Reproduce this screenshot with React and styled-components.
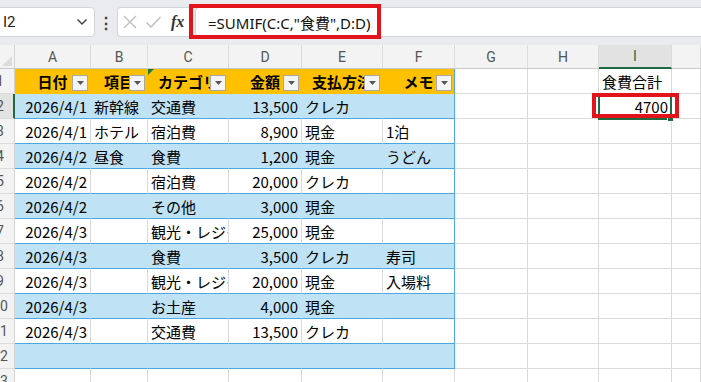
import styled, { createGlobalStyle } from "styled-components";

const GlobalStyle = createGlobalStyle`
  body {
    margin: 0;
    background: #fff;
    overflow: hidden;
    font-family: "Noto Sans CJK JP", "Noto Sans", sans-serif;
  }
`;

const Page = styled.div`
  width: 701px;
  height: 382px;
  overflow: hidden;
  display: flex;
  flex-direction: column;
  background: #fff;
`;

const Toolbar = styled.div`
  box-sizing: border-box;
  height: 45px;
  flex: none;
  background: #e9ebee;
  padding: 7px 0 8px;
  display: flex;
`;

const NameBox = styled.div`
  box-sizing: border-box;
  width: 101px;
  margin-left: -6px;
  background: #fff;
  border: 1px solid #d3d5d9;
  border-radius: 4px;
  display: flex;
  align-items: center;
  justify-content: space-between;
  padding: 0 6px 0 8px;
  font-family: Roboto, "Noto Sans", sans-serif;
  font-size: 15px;
  color: #222;
`;

const Dots = styled.div`
  width: 22px;
  display: flex;
  align-items: center;
  justify-content: center;
  font-size: 16px;
  font-weight: bold;
  color: #444;
`;

const FxBox = styled.div`
  box-sizing: border-box;
  width: 76px;
  background: #fff;
  border: 1px solid #d3d5d9;
  border-right: none;
  border-radius: 4px 0 0 4px;
  display: flex;
  align-items: center;
  gap: 7px;
  padding-left: 4px;
`;

const FxText = styled.span`
  font-family: "Liberation Serif", "DejaVu Serif", serif;
  font-style: italic;
  font-weight: 700;
  font-size: 16px;
  color: #333;
  margin-left: 2px;
`;

const FormulaInput = styled.div`
  box-sizing: border-box;
  flex: 1;
  margin-left: 2px;
  margin-right: -10px;
  background: #fff;
  border: 1px solid #d3d5d9;
  border-radius: 4px;
  position: relative;
  display: flex;
  align-items: center;
  padding-left: 12px;
  font-family: "Noto Sans", "Noto Sans CJK JP", sans-serif;
  font-size: 15px;
  color: #111;
`;

const Callout = styled.div`
  position: absolute;
  box-sizing: border-box;
  border: 4px solid #e3131b;
  pointer-events: none;
  z-index: 5;
  left: ${(p) => p.$left}px;
  top: ${(p) => p.$top}px;
  width: ${(p) => p.$w}px;
  height: ${(p) => p.$h}px;
`;

const Sheet = styled.div`
  display: grid;
  grid-template-columns: 15px 76px 57px 81px 73px 81px 72px 73px 71px 73px 1fr;
  grid-template-rows: 24px;
  grid-auto-rows: 25px;
`;

const Corner = styled.div`
  position: relative;
  background: #f3f3f3;
  border-right: 1px solid #d4d4d4;
  border-bottom: 1px solid #c9c9c9;
  box-sizing: border-box;

  &::after {
    content: "";
    position: absolute;
    right: 2px;
    bottom: 2px;
    border-left: 10px solid transparent;
    border-bottom: 10px solid #dcdcdc;
  }
`;

const ColHead = styled.div`
  box-sizing: border-box;
  display: flex;
  align-items: center;
  justify-content: center;
  background: ${(p) => (p.$active ? "#e2e2e2" : "#f3f3f3")};
  border-right: 1px solid #dcdcdc;
  border-bottom: ${(p) => (p.$active ? "2px solid #1e6b41" : "1px solid #c9c9c9")};
  font-family: Roboto, "Open Sans", sans-serif;
  font-size: 14px;
  color: ${(p) => (p.$active ? "#1e6b41" : "#555")};
`;

const RowHead = styled.div`
  box-sizing: border-box;
  overflow: hidden;
  background: ${(p) => (p.$active ? "#e2e2e2" : "#f3f3f3")};
  border-right: ${(p) => (p.$active ? "2px solid #1e6b41" : "1px solid #d4d4d4")};
  border-bottom: 1px solid #dcdcdc;
  display: flex;
  align-items: center;
`;

const RowNum = styled.span`
  flex: none;
  width: 30px;
  margin-left: -15px;
  text-align: center;
  font-family: Roboto, "Open Sans", sans-serif;
  font-size: 14px;
  color: #555;
`;

const Cell = styled.div`
  box-sizing: border-box;
  position: relative;
  display: flex;
  align-items: center;
  justify-content: ${(p) =>
    p.$align === "right" ? "flex-end" : p.$align === "center" ? "center" : "flex-start"};
  padding: 1px 3px 0;
  background: ${(p) => p.$bg || "#fff"};
  border-right: 1px solid ${(p) => p.$vline || "#dcdcdc"};
  border-bottom: 1px solid ${(p) => p.$hline || "#dcdcdc"};
  white-space: nowrap;
  overflow: ${(p) => (p.$selected ? "visible" : "hidden")};
  z-index: ${(p) => (p.$selected ? 3 : "auto")};
  font-size: 15px;
  font-weight: ${(p) => (p.$bold ? 700 : 400)};
  color: #000;
`;

const Selection = styled.div`
  position: absolute;
  left: -1px;
  top: -1px;
  right: -1px;
  bottom: -2px;
  border: 2px solid #1e6b41;
  pointer-events: none;

  &::after {
    content: "";
    position: absolute;
    right: -4px;
    bottom: -4px;
    width: 5px;
    height: 5px;
    background: #1e6b41;
    border: 1px solid #fff;
  }
`;

const FilterButton = styled.div`
  position: absolute;
  right: 2px;
  bottom: 2px;
  width: 16px;
  height: 16px;
  box-sizing: border-box;
  background: #f4f4f4;
  border: 1px solid #a8a8a8;
  display: flex;
  align-items: center;
  justify-content: center;
`;

const ErrorMark = styled.div`
  position: absolute;
  left: 0;
  top: 0;
  border-top: 6px solid #1a7a3c;
  border-right: 6px solid transparent;
`;

const ORANGE = "#ffc000";
const BLUE = "#bfe3f4";
const BLUE_LINE = "#4ea7de";
const GRID = "#d9d9d9";

const COLS = ["A", "B", "C", "D", "E", "F", "G", "H", "I", ""];
const HEADERS = ["日付", "項目", "カテゴリ", "金額", "支払方法", "メモ"];

const ROWS = [
  ["2026/4/1", "新幹線", "交通費", "13,500", "クレカ", ""],
  ["2026/4/1", "ホテル", "宿泊費", "8,900", "現金", "1泊"],
  ["2026/4/2", "昼食", "食費", "1,200", "現金", " うどん"],
  ["2026/4/2", "", "宿泊費", "20,000", "クレカ", ""],
  ["2026/4/2", "", "その他", "3,000", "現金", ""],
  ["2026/4/3", "", "観光・レジャー", "25,000", "現金", ""],
  ["2026/4/3", "", "食費", "3,500", "クレカ", "寿司"],
  ["2026/4/3", "", "観光・レジャー", "20,000", "現金", "入場料"],
  ["2026/4/3", "", "お土産", "4,000", "現金", ""],
  ["2026/4/3", "", "交通費", "13,500", "クレカ", ""],
  ["", "", "", "", "", ""],
];

const ALIGN = ["right", "left", "left", "right", "left", "left"];

function CrossIcon() {
  return (
    <svg width="16" height="16" viewBox="0 0 16 16">
      <path d="M2 2 L14 14 M14 2 L2 14" stroke="#bcbcbc" strokeWidth="1.3" fill="none" />
    </svg>
  );
}

function CheckIcon() {
  return (
    <svg width="17" height="16" viewBox="0 0 17 16">
      <path d="M1.5 8.5 L6 13 L15.5 3" stroke="#bcbcbc" strokeWidth="1.3" fill="none" />
    </svg>
  );
}

function Chevron() {
  return (
    <svg width="12" height="8" viewBox="0 0 12 8">
      <path d="M1.5 1.5 L6 6 L10.5 1.5" stroke="#444" strokeWidth="1.5" fill="none" />
    </svg>
  );
}

function DropArrow() {
  return (
    <svg width="7" height="4" viewBox="0 0 7 4">
      <path d="M0 0 L7 0 L3.5 4 Z" fill="#555" />
    </svg>
  );
}

function extraCells(rowNo) {
  const cells = [];
  for (let c = 6; c < 10; c++) {
    let content = null;
    let align = "left";
    let selected = false;
    if (c === 8 && rowNo === 1) content = "食費合計";
    if (c === 8 && rowNo === 2) {
      content = "4700";
      align = "right";
      selected = true;
    }
    cells.push(
      <Cell key={`${rowNo}-x${c}`} $align={align} $selected={selected} $vline={GRID} $hline={GRID}>
        {content}
        {selected && (
          <>
            <Selection />
            <Callout $left={-7} $top={-1} $w={87} $h={25} />
          </>
        )}
      </Cell>
    );
  }
  return cells;
}

export default function App() {
  return (
    <Page>
      <GlobalStyle />
      <Toolbar>
        <NameBox>
          <span>I2</span>
          <Chevron />
        </NameBox>
        <Dots>⋮</Dots>
        <FxBox>
          <CrossIcon />
          <CheckIcon />
          <FxText>fx</FxText>
        </FxBox>
        <FormulaInput>
          =SUMIF(C:C,"食費",D:D)
          <Callout $left={-7} $top={-4} $w={192} $h={35} />
        </FormulaInput>
      </Toolbar>

      <Sheet>
        <Corner />
        {COLS.map((c, i) => (
          <ColHead key={i} $active={c === "I"}>
            {c}
          </ColHead>
        ))}

        <RowHead>
          <RowNum>1</RowNum>
        </RowHead>
        {HEADERS.map((h, i) => (
          <Cell
            key={i}
            $align="center"
            $bold
            $bg={ORANGE}
            $vline={i === 5 ? BLUE_LINE : ORANGE}
            $hline={ORANGE}
          >
            {h}
            {i === 2 && <ErrorMark />}
            <FilterButton>
              <DropArrow />
            </FilterButton>
          </Cell>
        ))}
        {extraCells(1)}

        {ROWS.map((row, r) => {
          const rowNo = r + 2;
          const banded = rowNo % 2 === 0;
          return [
            <RowHead key={`h${rowNo}`} $active={rowNo === 2}>
              <RowNum>{rowNo}</RowNum>
            </RowHead>,
            ...row.map((v, c) => (
              <Cell
                key={`${rowNo}-${c}`}
                $align={ALIGN[c]}
                $bg={banded ? BLUE : "#fff"}
                $vline={c === 5 ? BLUE_LINE : banded ? BLUE : GRID}
                $hline={BLUE_LINE}
              >
                {v}
              </Cell>
            )),
            ...extraCells(rowNo),
          ];
        })}

        <RowHead>
          <RowNum>13</RowNum>
        </RowHead>
        {COLS.map((c, i) => (
          <Cell key={`13-${i}`} $vline={GRID} $hline={GRID} />
        ))}
      </Sheet>
    </Page>
  );
}
